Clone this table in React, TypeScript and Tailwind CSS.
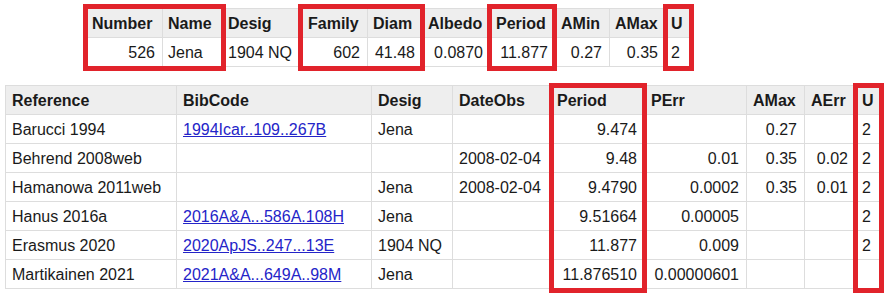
import React from "react";

const RED = "border-[5px] border-[#e1232b]";

type Col = { h: string; r?: boolean };

const topCols: Col[] = [
  { h: "Number", r: true },
  { h: "Name" },
  { h: "Desig" },
  { h: "Family", r: true },
  { h: "Diam", r: true },
  { h: "Albedo", r: true },
  { h: "Period", r: true },
  { h: "AMin", r: true },
  { h: "AMax", r: true },
  { h: "U" },
];
const topRow = ["526", "Jena", "1904 NQ", "602", "41.48", "0.0870", "11.877", "0.27", "0.35", "2"];

const botCols: Col[] = [
  { h: "Reference" },
  { h: "BibCode" },
  { h: "Desig" },
  { h: "DateObs" },
  { h: "Period", r: true },
  { h: "PErr", r: true },
  { h: "AMax", r: true },
  { h: "AErr", r: true },
  { h: "U" },
];
const botRows: string[][] = [
  ["Barucci 1994", "1994Icar..109..267B", "Jena", "", "9.474", "", "0.27", "", "2"],
  ["Behrend 2008web", "", "", "2008-02-04", "9.48", "0.01", "0.35", "0.02", "2"],
  ["Hamanowa 2011web", "", "Jena", "2008-02-04", "9.4790", "0.0002", "0.35", "0.01", "2"],
  ["Hanus 2016a", "2016A&A...586A.108H", "Jena", "", "9.51664", "0.00005", "", "", "2"],
  ["Erasmus 2020", "2020ApJS..247...13E", "1904 NQ", "", "11.877", "0.009", "", "", "2"],
  ["Martikainen 2021", "2021A&A...649A..98M", "Jena", "", "11.876510", "0.00000601", "", "", ""],
];

const cellBase =
  "border-r border-b border-[#dddddd] pr-[7px] pt-[6px] leading-[18px] whitespace-nowrap h-[29px] overflow-hidden";

function DataGrid({
  cols,
  rows,
  link,
  template,
  pl,
}: {
  cols: Col[];
  rows: string[][];
  link?: number;
  template: string;
  pl: string;
}) {
  return (
    <div
      className={`grid w-max border-t border-l border-[#dddddd] text-[16px] text-[#1a1a1a] ${template}`}
      style={{ fontFamily: '"Liberation Sans", Arial, sans-serif' }}
    >
      {cols.map((c, i) => (
        <div key={`h${i}`} className={`${cellBase} ${pl} bg-[#eeeeee] font-bold text-left`}>
          {c.h}
        </div>
      ))}
      {rows.map((r, ri) =>
        r.map((v, ci) => (
          <div key={`${ri}-${ci}`} className={`${cellBase} ${pl} ${cols[ci].r ? "text-right" : "text-left"}`}>
            {link === ci && v ? <a className="text-[#2424c8] underline">{v}</a> : v}
          </div>
        ))
      )}
    </div>
  );
}

export default function App() {
  return (
    <div className="relative w-[892px] h-[300px] bg-white overflow-hidden">
      <div className="flex flex-col">
        <div className="pt-[8px] pl-[86px]">
          <DataGrid
            cols={topCols}
            rows={[topRow]}
            template="grid-cols-[76px_60px_80px_65px_55px_68px_65px_54px_56px_25px]"
            pl="pl-[5px]"
          />
        </div>
        <div className="pt-[18px] pl-[5px]">
          <DataGrid
            cols={botCols}
            rows={botRows}
            link={1}
            template="grid-cols-[171px_195px_81px_98px_94px_102px_58px_51px_25px]"
            pl="pl-[6px]"
          />
        </div>
      </div>
      <div className={`absolute ${RED} left-[83px] top-[4px] w-[143px] h-[67px]`} />
      <div className={`absolute ${RED} left-[298px] top-[4px] w-[127px] h-[67px]`} />
      <div className={`absolute ${RED} left-[487px] top-[4px] w-[70px] h-[67px]`} />
      <div className={`absolute ${RED} left-[663px] top-[4px] w-[31px] h-[67px]`} />
      <div className={`absolute ${RED} left-[549px] top-[83px] w-[98px] h-[210px]`} />
      <div className={`absolute ${RED} left-[853px] top-[83px] w-[31px] h-[210px]`} />
    </div>
  );
}
